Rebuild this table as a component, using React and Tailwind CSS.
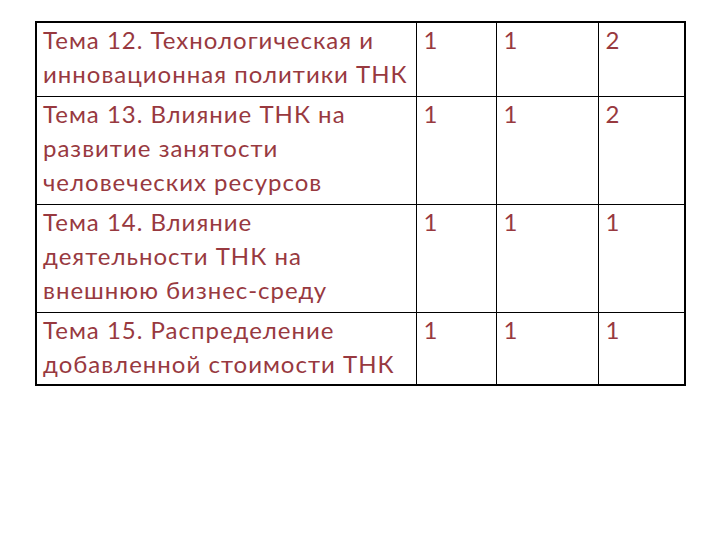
const rows = [
  { h: "h-[74px]", lines: ["Тема 12. Технологическая и", "инновационная политики ТНК"], vals: ["1", "1", "2"] },
  { h: "h-[108px]", lines: ["Тема 13. Влияние ТНК на", "развитие занятости", "человеческих ресурсов"], vals: ["1", "1", "2"] },
  { h: "h-[108px]", lines: ["Тема 14. Влияние", "деятельности ТНК на", "внешнюю бизнес-среду"], vals: ["1", "1", "1"] },
  { h: "h-[73px]", lines: ["Тема 15. Распределение", "добавленной стоимости ТНК"], vals: ["1", "1", "1"] },
];

const App = () => {
  return (
    <div className="w-[720px] h-[540px] bg-white pt-[21px] pl-[35px]">
      <table
        className="border-collapse border-2 border-black text-[#98393f] table-fixed w-[649px]"
        style={{ fontFamily: "Lato, 'Open Sans', sans-serif" }}
      >
        <colgroup>
          <col className="w-[380px]" />
          <col className="w-[80px]" />
          <col className="w-[102px]" />
          <col className="w-[87px]" />
        </colgroup>
        <tbody>
          {rows.map((r, i) => (
            <tr key={i} className={r.h}>
              <td className="border border-black align-top pl-[6px] pr-0 pt-0 text-[24px] leading-[34px] tracking-[1px] whitespace-nowrap overflow-hidden">
                {r.lines.map((l, k) => (
                  <div key={k}>{l}</div>
                ))}
              </td>
              {r.vals.map((v, j) => (
                <td key={j} className="border border-black align-top pl-[7px] pr-0 pt-0 text-[24px] leading-[34px]">
                  {v}
                </td>
              ))}
            </tr>
          ))}
        </tbody>
      </table>
    </div>
  );
};

export default App;
